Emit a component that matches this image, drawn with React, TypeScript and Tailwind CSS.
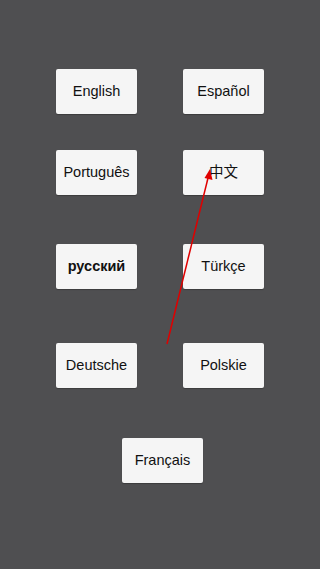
const Btn = ({ label, bold }: { label: string; bold?: boolean }) => (
  <div
    className={`w-[81px] h-[45px] flex items-center justify-center bg-[#f5f5f5] rounded-[2px] shadow-[0_1px_1px_rgba(0,0,0,0.25)] text-[14.5px] text-[#111] ${
      bold ? 'font-bold' : ''
    }`}
  >
    {label}
  </div>
)

export default function App() {
  return (
    <div
      className="relative w-[320px] h-[569px] bg-[#4f4f51] overflow-hidden"
      style={{ fontFamily: '"Liberation Sans", "Noto Sans CJK SC", Arial, sans-serif' }}
    >
      <div className="flex flex-col items-center pt-[69px]">
        <div className="flex gap-[46px]">
          <Btn label="English" />
          <Btn label="Español" />
        </div>
        <div className="flex gap-[46px] mt-[36px]">
          <Btn label="Português" />
          <Btn label="中文" />
        </div>
        <div className="flex gap-[46px] mt-[49px]">
          <Btn label="русский" bold />
          <Btn label="Türkçe" />
        </div>
        <div className="flex gap-[46px] mt-[54px]">
          <Btn label="Deutsche" />
          <Btn label="Polskie" />
        </div>
        <div className="mt-[50px] ml-[5px]">
          <Btn label="Français" />
        </div>
      </div>
      <svg className="absolute inset-0 pointer-events-none" width="320" height="569">
        <line x1="167" y1="344" x2="208" y2="178" stroke="#e00000" strokeWidth="1.5" />
        <polygon points="210,169 212.5,180 204.5,178" fill="#e00000" />
      </svg>
    </div>
  )
}
